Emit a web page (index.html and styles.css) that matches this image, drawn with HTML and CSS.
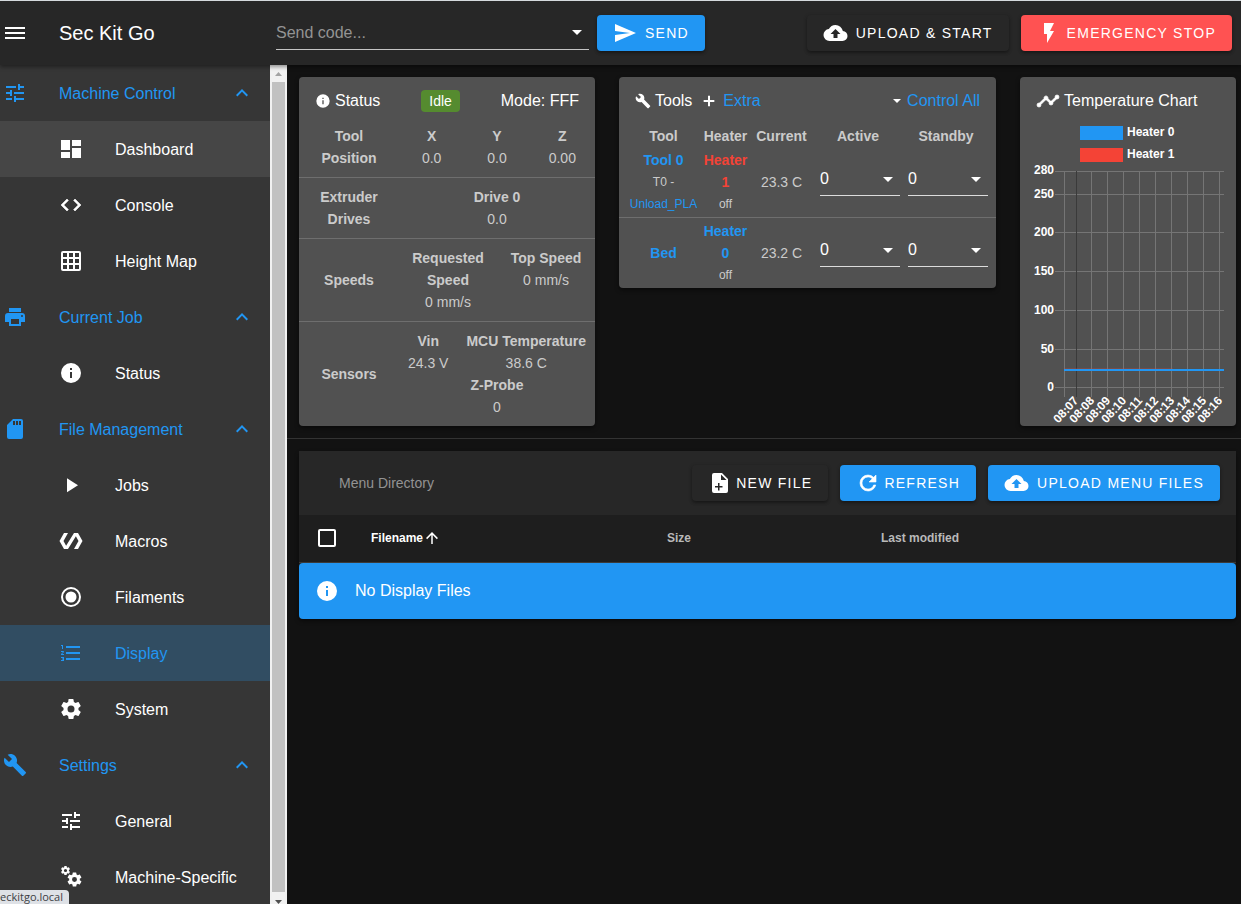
FILE: index.html
```html
<!DOCTYPE html>
<html lang="en">
<head>
<meta charset="utf-8">
<meta name="viewport" content="width=device-width, initial-scale=1">
<title>Sec Kit Go</title>
<link rel="stylesheet" href="styles.css">
</head>
<body>
<svg class="sprite" aria-hidden="true">
  <symbol id="i-menu" viewBox="0 0 24 24"><path d="M2 6h20v2H2zM2 11h20v2H2zM2 16h20v2H2z"/></symbol>
  <symbol id="i-tune" viewBox="0 0 24 24"><path d="M3 17v2h6v-2H3M3 5v2h10V5H3m10 16v-2h8v-2h-8v-2h-2v6h2M7 9v2H3v2h4v2h2V9H7m14 4v-2H11v2h10m-6-4h2V7h4V5h-4V3h-2v6z"/></symbol>
  <symbol id="i-up" viewBox="0 0 24 24"><path d="M7.41 15.41 12 10.83l4.59 4.58L18 14l-6-6-6 6 1.41 1.41z"/></symbol>
  <symbol id="i-dash" viewBox="0 0 24 24"><path d="M13 3v6h9V3m-9 18h9V11h-9M2 21h9v-6H2m0-2h9V3H2v10z"/></symbol>
  <symbol id="i-code" viewBox="0 0 24 24"><path stroke="currentColor" stroke-width=".6" d="m14.6 16.6 4.600-4.600-4.600-4.600L16 6l6 6-6 6-1.400-1.400m-5.200 0L4.800 12l4.600-4.600L8 6l-6 6 6 6 1.400-1.400z"/></symbol>
  <symbol id="i-grid" viewBox="0 0 24 24"><path d="M10 4v4h4V4h-4m6 0v4h4V4h-4m0 6v4h4v-4h-4m0 6v4h4v-4h-4m-2 4v-4h-4v4h4m-6 0v-4H4v4h4m0-6v-4H4v4h4m0-6V4H4v4h4m2 6h4v-4h-4v4M4 2h16a2 2 0 0 1 2 2v16a2 2 0 0 1-2 2H4a2 2 0 0 1-2-2V4a2 2 0 0 1 2-2z"/></symbol>
  <symbol id="i-print" viewBox="0 0 24 24"><path d="M18 3H6v4h12m1 5a1 1 0 0 1-1-1 1 1 0 0 1 1-1 1 1 0 0 1 1 1 1 1 0 0 1-1 1m-3 7H8v-5h8m3-6H5a3 3 0 0 0-3 3v6h4v4h12v-4h4v-6a3 3 0 0 0-3-3z"/></symbol>
  <symbol id="i-info" viewBox="0 0 24 24"><path d="M13 9h-2V7h2m0 10h-2v-6h2m-1-9A10 10 0 0 0 2 12a10 10 0 0 0 10 10 10 10 0 0 0 10-10A10 10 0 0 0 12 2z"/></symbol>
  <symbol id="i-sd" viewBox="0 0 24 24"><path d="M18 8h-2V4h2m-3 4h-2V4h2m-3 4h-2V4h2m6-2h-8L4 8v12a2 2 0 0 0 2 2h12a2 2 0 0 0 2-2V4a2 2 0 0 0-2-2z"/></symbol>
  <symbol id="i-play" viewBox="0 0 24 24"><path d="M8 5.140v14l11-7-11-7z"/></symbol>
  <symbol id="i-macro" viewBox="0 0 24 24"><path d="M19 4h-4L7.110 16.630 4.500 12 9 4H5L.5 12 5 20h4l7.890-12.630L19.500 12 15 20h4l4.500-8L19 4z"/></symbol>
  <symbol id="i-record" viewBox="0 0 24 24"><path fill-rule="evenodd" d="M12 2a10 10 0 1 0 0 20 10 10 0 0 0 0-20m0 2a8 8 0 1 1 0 16 8 8 0 0 1 0-16m0 2.500a5.500 5.500 0 1 0 0 11 5.500 5.500 0 0 0 0-11z"/></symbol>
  <symbol id="i-list" viewBox="0 0 24 24"><path d="M7 13v-2h14v2H7m0 6v-2h14v2H7M7 7V5h14v2H7M3 8V5H2V4h2v4H3m-1 9v-1h3v4H2v-1h2v-.500H3v-1h1V17H2m2.250-7a.75.75 0 0 1 .75.750c0 .2-.080.390-.210.520L3.120 13H5v1H2v-.920L4 11H2v-1h2.250z"/></symbol>
  <symbol id="i-cog" viewBox="0 0 24 24"><path d="M12 15.500A3.500 3.500 0 0 1 8.500 12 3.500 3.500 0 0 1 12 8.500a3.500 3.500 0 0 1 3.500 3.500 3.500 3.500 0 0 1-3.500 3.500m7.430-2.530c.04-.32.07-.64.07-.97 0-.33-.03-.66-.07-1l2.110-1.630c.19-.15.24-.42.12-.64l-2-3.460c-.12-.22-.39-.31-.61-.22l-2.490 1c-.52-.39-1.060-.73-1.690-.98l-.37-2.650A.506.506 0 0 0 14 2h-4c-.25 0-.46.18-.5.42l-.37 2.650c-.63.25-1.170.59-1.690.98l-2.490-1c-.22-.09-.49 0-.61.22l-2 3.460c-.13.22-.07.49.12.64L4.570 11c-.04.34-.07.67-.07 1 0 .33.03.65.07.97l-2.110 1.660c-.19.15-.25.42-.12.64l2 3.460c.12.22.39.3.61.22l2.490-1.010c.52.4 1.060.74 1.690.99l.37 2.650c.04.24.25.42.5.42h4c.25 0 .46-.18.5-.42l.37-2.650c.63-.26 1.170-.59 1.690-.99l2.490 1.010c.22.08.49 0 .61-.22l2-3.460c.12-.22.07-.49-.12-.64l-2.110-1.660z"/></symbol>
  <symbol id="i-wrench" viewBox="0 0 24 24"><path d="m22.700 19-9.100-9.100c.9-2.300.4-5-1.500-6.900-2-2-5-2.400-7.400-1.300L9 6 6 9 1.600 4.700C.4 7.100.9 10.100 2.900 12.100c1.900 1.900 4.600 2.400 6.900 1.500l9.100 9.100c.4.4 1 .4 1.400 0l2.300-2.300c.5-.4.500-1.100.1-1.400z"/></symbol>
  <symbol id="i-cogs" viewBox="0 0 24 24"><svg x="1" y="0" width="11" height="11" viewBox="0 0 24 24"><use href="#i-cog"/></svg><svg x="7" y="6" width="17" height="17" viewBox="0 0 24 24"><use href="#i-cog"/></svg></symbol>
  <symbol id="i-caret" viewBox="0 0 10 5"><path d="M0 0h10L5 5z"/></symbol>
  <symbol id="i-send" viewBox="0 0 24 24"><path d="m2 21 21-9L2 3v7l15 2-15 2v7z"/></symbol>
  <symbol id="i-cloud" viewBox="0 0 24 24"><path d="M14 13v4h-4v-4H7l5-5 5 5m2.350-2.970A7.490 7.490 0 0 0 12 4C9.110 4 6.600 5.640 5.350 8.030A6.004 6.004 0 0 0 0 14a6 6 0 0 0 6 6h13a5 5 0 0 0 5-5c0-2.640-2.050-4.780-4.650-4.970z"/></symbol>
  <symbol id="i-flash" viewBox="0 0 24 24"><path d="M7 2v11h3v9l7-12h-4l4-8H7z"/></symbol>
  <symbol id="i-plus" viewBox="0 0 24 24"><path d="M20 13.500h-6.500V20h-3v-6.500H4v-3h6.500V4h3v6.500H20z"/></symbol>
  <symbol id="i-chart" viewBox="0 0 24 24"><path stroke="currentColor" stroke-width=".7" d="M3 14l.5.07L8.070 9.500C7.890 8.850 8.060 8.110 8.590 7.590c.78-.79 2.040-.79 2.820 0 .53.520.7 1.260.52 1.910l2.570 2.570L15 12c.18 0 .35 0 .5.070L19.070 8.500C19 8.350 19 8.180 19 8a2 2 0 0 1 2-2 2 2 0 0 1 2 2 2 2 0 0 1-2 2c-.18 0-.35 0-.5-.070L16.930 13.500c.07.15.07.32.07.5a2 2 0 0 1-2 2 2 2 0 0 1-2-2l.07-.5-2.570-2.570c-.32.07-.68.07-1 0L4.930 15.500 5 16a2 2 0 0 1-2 2 2 2 0 0 1-2-2 2 2 0 0 1 2-2z"/></symbol>
  <symbol id="i-file" viewBox="0 0 24 24"><path fill-rule="evenodd" d="M14 2H6a2 2 0 0 0-2 2v16a2 2 0 0 0 2 2h12a2 2 0 0 0 2-2V8l-6-6zM13 3.500V9h5.500zM10 12h1.500v3h3v1.500h-3v3H10v-3H7V15h3z"/></symbol>
  <symbol id="i-refresh" viewBox="0 0 24 24"><path stroke="currentColor" stroke-width=".6" d="M17.650 6.350A7.958 7.958 0 0 0 12 4a8 8 0 0 0-8 8 8 8 0 0 0 8 8c3.730 0 6.840-2.550 7.730-6h-2.080A5.990 5.990 0 0 1 12 18a6 6 0 0 1-6-6 6 6 0 0 1 6-6c1.660 0 3.140.69 4.220 1.780L13 11h7V4l-2.350 2.350z"/></symbol>
  <symbol id="i-arrow" viewBox="0 0 24 24"><path d="M13 20h-2V8l-5.500 5.500-1.420-1.420L12 4.160l7.920 7.920-1.420 1.420L13 8v12z"/></symbol>
</svg>

<div class="app">
  <header class="bar">
    <button class="plain" aria-label="Menu"><svg class="icon"><use href="#i-menu"/></svg></button>
    <h1 class="brand">Sec Kit Go</h1>
    <div class="combo">
      <input class="combo-input" type="text" placeholder="Send code..." aria-label="Send code">
      <svg class="caret"><use href="#i-caret"/></svg>
    </div>
    <button class="btn blue"><svg class="icon"><use href="#i-send"/></svg>SEND</button>
    <span class="grow"></span>
    <button class="btn"><svg class="icon wide"><use href="#i-cloud"/></svg>UPLOAD &amp; START</button>
    <button class="btn red"><svg class="icon"><use href="#i-flash"/></svg>EMERGENCY STOP</button>
  </header>

  <div class="body">
    <div class="side">
      <nav class="nav">
        <a class="group" href="#"><svg class="icon"><use href="#i-tune"/></svg><span>Machine Control</span><svg class="icon chev"><use href="#i-up"/></svg></a>
        <a class="item hover" href="#"><svg class="icon"><use href="#i-dash"/></svg><span>Dashboard</span></a>
        <a class="item" href="#"><svg class="icon"><use href="#i-code"/></svg><span>Console</span></a>
        <a class="item" href="#"><svg class="icon"><use href="#i-grid"/></svg><span>Height Map</span></a>
        <a class="group" href="#"><svg class="icon"><use href="#i-print"/></svg><span>Current Job</span><svg class="icon chev"><use href="#i-up"/></svg></a>
        <a class="item" href="#"><svg class="icon"><use href="#i-info"/></svg><span>Status</span></a>
        <a class="group" href="#"><svg class="icon"><use href="#i-sd"/></svg><span>File Management</span><svg class="icon chev"><use href="#i-up"/></svg></a>
        <a class="item" href="#"><svg class="icon"><use href="#i-play"/></svg><span>Jobs</span></a>
        <a class="item" href="#"><svg class="icon"><use href="#i-macro"/></svg><span>Macros</span></a>
        <a class="item" href="#"><svg class="icon"><use href="#i-record"/></svg><span>Filaments</span></a>
        <a class="item active" href="#" aria-current="page"><svg class="icon"><use href="#i-list"/></svg><span>Display</span></a>
        <a class="item" href="#"><svg class="icon"><use href="#i-cog"/></svg><span>System</span></a>
        <a class="group" href="#"><svg class="icon"><use href="#i-wrench"/></svg><span>Settings</span><svg class="icon chev"><use href="#i-up"/></svg></a>
        <a class="item" href="#"><svg class="icon"><use href="#i-tune"/></svg><span>General</span></a>
        <a class="item" href="#"><svg class="icon"><use href="#i-cogs"/></svg><span>Machine-Specific</span></a>
      </nav>
      <div class="scroll" aria-hidden="true">
        <svg class="scroll-arrow off" viewBox="0 0 17 17"><path d="M5 11h7L8.500 7z"/></svg>
        <div class="thumb"></div>
        <svg class="scroll-arrow down" viewBox="0 0 17 12"><path d="M5 8h7l-3.500 4z"/></svg>
      </div>
    </div>

    <main class="main">
      <div class="panels">
        <section class="card">
          <div class="card-head spread">
            <h2 class="title"><svg class="icon sm"><use href="#i-info"/></svg>Status</h2>
            <span class="chip">Idle</span>
            <span>Mode: FFF</span>
          </div>
          <div class="row first">
            <strong class="label">Tool Position</strong>
            <div class="vals even">
              <div><strong>X</strong><span>0.0</span></div>
              <div><strong>Y</strong><span>0.0</span></div>
              <div><strong>Z</strong><span>0.00</span></div>
            </div>
          </div>
          <div class="row">
            <strong class="label">Extruder Drives</strong>
            <div class="vals even"><div><strong>Drive 0</strong><span>0.0</span></div></div>
          </div>
          <div class="row">
            <strong class="label">Speeds</strong>
            <div class="vals even">
              <div><strong>Requested Speed</strong><span>0 mm/s</span></div>
              <div><strong>Top Speed</strong><span>0 mm/s</span></div>
            </div>
          </div>
          <div class="row">
            <strong class="label">Sensors</strong>
            <div class="vals wrap">
              <div><strong>Vin</strong><span>24.3 V</span></div>
              <div><strong>MCU Temperature</strong><span>38.6 C</span></div>
              <div><strong>Z-Probe</strong><span>0</span></div>
            </div>
          </div>
        </section>

        <section class="card">
          <div class="card-head">
            <h2 class="title"><svg class="icon sm"><use href="#i-wrench"/></svg>Tools</h2>
            <a class="link extra" href="#"><svg class="icon plus"><use href="#i-plus"/></svg>Extra</a>
            <span class="grow"></span>
            <a class="link control" href="#"><svg class="caret tiny"><use href="#i-caret"/></svg>Control All</a>
          </div>
          <table class="tools">
            <colgroup><col class="c-tool"><col class="c-heater"><col class="c-current"><col class="c-active"><col class="c-standby"></colgroup>
            <thead>
              <tr><th>Tool</th><th>Heater</th><th>Current</th><th class="set">Active</th><th class="set end">Standby</th></tr>
            </thead>
            <tbody>
              <tr>
                <td><a class="link b" href="#">Tool 0</a><small>T0 -</small><small><a class="link" href="#">Unload_PLA</a></small></td>
                <td><a class="link b hot" href="#">Heater 1</a><small>off</small></td>
                <td>23.3 C</td>
                <td class="set"><div class="pick"><select aria-label="Tool 0 active temperature"><option>0</option></select><svg class="caret"><use href="#i-caret"/></svg></div></td>
                <td class="set end"><div class="pick"><select aria-label="Tool 0 standby temperature"><option>0</option></select><svg class="caret"><use href="#i-caret"/></svg></div></td>
              </tr>
              <tr>
                <td><a class="link b" href="#">Bed</a></td>
                <td><a class="link b" href="#">Heater 0</a><small>off</small></td>
                <td>23.2 C</td>
                <td class="set"><div class="pick"><select aria-label="Bed active temperature"><option>0</option></select><svg class="caret"><use href="#i-caret"/></svg></div></td>
                <td class="set end"><div class="pick"><select aria-label="Bed standby temperature"><option>0</option></select><svg class="caret"><use href="#i-caret"/></svg></div></td>
              </tr>
            </tbody>
          </table>
        </section>

        <section class="card">
          <div class="card-head">
            <h2 class="title"><svg class="icon"><use href="#i-chart"/></svg>Temperature Chart</h2>
          </div>
          <svg class="chart" viewBox="0 0 216 301" role="img" aria-label="Heater temperatures over time">
            <rect x="60" y="1" width="43" height="14" fill="#2196f3"/>
            <rect x="60" y="23" width="43" height="14" fill="#f44336"/>
            <text x="107" y="11">Heater 0</text>
            <text x="107" y="33">Heater 1</text>
            <path class="gridline" d="M35 46.500H204M35 69.500H204M35 107.500H204M35 146.500H204M35 185.500H204M35 224.500H204M35 262.500H204M44.500 46V272M71.500 46V272M87.500 46V272M103.500 46V272M119.500 46V272M135.500 46V272M151.500 46V272M167.500 46V272M183.500 46V272M199.500 46V272"/>
            <path class="zero" d="M56.500 46V272"/>
            <g text-anchor="end">
              <text x="34" y="49">280</text><text x="34" y="73">250</text><text x="34" y="111">200</text><text x="34" y="150">150</text><text x="34" y="189">100</text><text x="34" y="228">50</text><text x="34" y="266">0</text>
              <text transform="translate(59 276) rotate(-48)">08:07</text>
              <text transform="translate(75 276) rotate(-48)">08:08</text>
              <text transform="translate(91 276) rotate(-48)">08:09</text>
              <text transform="translate(107 276) rotate(-48)">08:10</text>
              <text transform="translate(123 276) rotate(-48)">08:11</text>
              <text transform="translate(139 276) rotate(-48)">08:12</text>
              <text transform="translate(155 276) rotate(-48)">08:13</text>
              <text transform="translate(171 276) rotate(-48)">08:14</text>
              <text transform="translate(187 276) rotate(-48)">08:15</text>
              <text transform="translate(203 276) rotate(-48)">08:16</text>
            </g>
            <path d="M44 244.500H152L153 245H204" fill="none" stroke="#f44336" stroke-opacity=".5" stroke-width="2"/>
            <path d="M44 245H204" fill="none" stroke="#2196f3" stroke-width="2"/>
          </svg>
        </section>
      </div>

      <hr class="rule">

      <section class="files">
        <div class="files-bar">
          <span class="crumb">Menu Directory</span>
          <span class="grow"></span>
          <button class="btn tight"><svg class="icon"><use href="#i-file"/></svg>NEW FILE</button>
          <button class="btn tight blue"><svg class="icon"><use href="#i-refresh"/></svg>REFRESH</button>
          <button class="btn blue"><svg class="icon wide"><use href="#i-cloud"/></svg>UPLOAD MENU FILES</button>
        </div>
        <table class="list">
          <colgroup><col class="c-check"><col class="c-name"><col class="c-size"><col></colgroup>
          <thead>
            <tr>
              <th><input class="check" type="checkbox" aria-label="Select all files"></th>
              <th class="sorted"><span class="sort">Filename<svg class="icon arrow"><use href="#i-arrow"/></svg></span></th>
              <th>Size</th>
              <th>Last modified</th>
            </tr>
          </thead>
        </table>
        <div class="notice" role="status"><svg class="icon"><use href="#i-info"/></svg>No Display Files</div>
      </section>
    </main>
  </div>
  <div class="hint">eckitgo.local</div>
</div>
</body>
</html>
```
FILE: styles.css
```css
* { box-sizing: border-box; }

html, body { height: 100%; }

body {
  margin: 0;
  padding-right: 7px;
  background: #fff;
  color: #fff;
  font: 16px/24px "Liberation Sans", Arial, sans-serif;
  overflow: hidden;
}

a { color: inherit; text-decoration: none; }
h1, h2 { margin: 0; font-size: 16px; font-weight: 400; }
button, input, select { font: inherit; color: inherit; }

.sprite { display: none; }
.icon { width: 24px; height: 24px; flex: none; fill: currentColor; }
.caret { width: 10px; height: 5px; flex: none; fill: #fff; }
.grow { flex: 1; }

.app {
  position: relative;
  height: 100vh;
  display: flex;
  flex-direction: column;
  border-top: 1px solid #d5dade;
  background: #121212;
  overflow: hidden;
}

/* Top bar */
.bar {
  position: relative;
  z-index: 1;
  flex: none;
  display: flex;
  align-items: center;
  height: 64px;
  padding: 0 9px 0 3px;
  background: #272727;
  box-shadow: 0 2px 4px rgba(0, 0, 0, .4);
}
.plain { display: flex; padding: 0; border: 0; background: none; }
.brand { width: 217px; margin-left: 32px; font-size: 20px; }
.combo {
  width: 313px;
  height: 34px;
  display: flex;
  align-items: center;
  padding-right: 7px;
  border-bottom: 1px solid #c4c4c4;
}
.combo-input {
  flex: 1;
  min-width: 0;
  padding: 0;
  border: 0;
  outline: 0;
  background: none;
}
.combo-input::placeholder { color: #939393; opacity: 1; }

.btn {
  flex: none;
  display: flex;
  align-items: center;
  gap: 8px;
  height: 36px;
  padding: 0 16px;
  border: 0;
  border-radius: 4px;
  background: #272727;
  font-size: 14px;
  letter-spacing: .09em;
  box-shadow: 0 2px 3px rgba(0, 0, 0, .3), 0 1px 4px rgba(0, 0, 0, .15);
}
.btn .wide { width: 25px; }
.btn.tight { gap: 4px; }
.btn.blue { background: #2196f3; }
.btn.red { gap: 6px; background: #ff5252; }
.bar .btn { margin-left: 8px; }
.bar .btn.red { margin-left: 12px; }

/* Sidebar */
.body { flex: 1; min-height: 0; display: flex; }
.side { flex: none; display: flex; width: 287px; }
.nav { flex: 1; background: #363636; overflow: hidden; }
.group, .item { display: flex; align-items: center; height: 56px; }
.group span, .item span { flex: 1; padding-top: 2px; }
.group { gap: 32px; padding: 0 16px 0 3px; color: #2196f3; }
.item { gap: 32px; padding-left: 59px; }
.item.hover { background: #464646; }
.item.active { background: #314d62; color: #2196f3; }
.scroll { width: 17px; display: flex; flex-direction: column; background: #f1f1f1; }
.scroll-arrow { width: 17px; height: 17px; flex: none; fill: #505050; }
.scroll-arrow.off { fill: #a3a3a3; }
.scroll-arrow.down { height: 12px; }
.thumb { flex: 1; margin: 0 2px; background: #c1c1c1; }

/* Panels */
.main { flex: 1; min-width: 0; padding: 12px 5px 12px 0; }
.panels {
  display: grid;
  grid-template-columns: minmax(0, 296fr) minmax(0, 377fr) minmax(0, 216fr);
  gap: 24px;
  align-items: start;
  padding-left: 12px;
}
.card {
  border-radius: 4px;
  background: #515151;
  color: #cbcbcb;
  font-size: 14px;
  line-height: 22px;
  box-shadow: 0 2px 4px rgba(0, 0, 0, .5);
  overflow: hidden;
}
.card-head {
  display: flex;
  align-items: center;
  height: 48px;
  padding: 0 16px;
  color: #fff;
  font-size: 16px;
}
.spread { justify-content: space-between; }
.title { display: flex; align-items: center; gap: 4px; }
.icon.sm { width: 16px; height: 16px; }
.chip {
  padding: 0 8px;
  border-radius: 4px;
  background: #558b2f;
  font-size: 14px;
}

.row { display: flex; align-items: center; padding: 8px 0; border-top: 1px solid #6e6e6e; text-align: center; }
.row.first { padding-top: 0; border-top: 0; }
.label { flex: none; width: 100px; padding: 0 16px; }
.vals { flex: 1; min-width: 0; display: flex; }
.vals > div { display: flex; flex-direction: column; }
.even > div { flex: 1 1 0; min-width: 0; }
.wrap { flex-wrap: wrap; }
.wrap > div { flex: 1 1 auto; }

.link { color: #2196f3; }
.link.b { font-weight: 700; }
.link.hot { color: #f44336; }
.extra, .control { display: flex; align-items: center; gap: 6px; margin-left: 9px; }
.extra svg { color: #fff; }
.icon.plus { width: 16px; height: 16px; }
.caret.tiny { width: 8px; height: 4px; }

.tools { width: 100%; table-layout: fixed; border-collapse: collapse; text-align: center; }
.tools th { padding: 0; }
.tools td { padding: 2px 0; }
.tools td:first-child, .tools th:first-child { padding-left: 8px; }
.tools tbody tr + tr { border-top: 1px solid #6e6e6e; }
.tools small { display: block; font-size: 12px; }
.c-tool { width: 81px; }
.c-heater { width: 51px; }
.c-current { width: 61px; }
.c-active { width: 88px; }
.c-standby { width: 96px; }
.tools .set { padding-left: 8px; }
.tools th.set { padding-left: 4px; }
.tools .end { padding-right: 8px; }
.pick { display: grid; align-items: center; height: 28px; border-bottom: 1px solid #dcdcdc; padding-bottom: 5px; }
.pick select, .pick .caret { grid-area: 1 / 1; }
.pick select {
  width: 100%;
  padding: 0;
  border: 0;
  outline: 0;
  background: none;
  appearance: none;
  color: #fff;
  font-size: 16px;
}
.pick .caret { justify-self: end; margin-right: 7px; pointer-events: none; }

.chart { display: block; width: 100%; }
.chart text { fill: #fff; font: 700 12px "Liberation Sans", Arial, sans-serif; }
.gridline { fill: none; stroke: #757575; }
.zero { stroke: #3a3a3a; }

.rule { height: 1px; margin: 12px -5px 12px 0; border: 0; background: #333; }

/* File list */
.files { margin-left: 12px; background: #1e1e1e; box-shadow: 0 2px 4px rgba(0, 0, 0, .5); border-radius: 4px; }
.files-bar {
  display: flex;
  align-items: center;
  gap: 12px;
  height: 64px;
  padding: 0 16px 0 40px;
  background: #272727;
}
.crumb { color: #939393; font-size: 14px; }
.list { width: 100%; table-layout: fixed; border-collapse: collapse; border-bottom: 1px solid #3a3a3a; text-align: left; }
.list th { height: 47px; padding: 0; color: #b9b9b9; font-size: 12px; }
.list th.sorted { color: #fff; }
.c-check { width: 72px; }
.c-name { width: 296px; }
.c-size { width: 214px; }
.sort { display: flex; align-items: center; }
.icon.arrow { width: 18px; height: 18px; }
.check {
  display: block;
  width: 18px;
  height: 18px;
  margin: 0 0 0 19px;
  border: 2px solid #fff;
  border-radius: 2px;
  appearance: none;
}
.notice {
  display: flex;
  align-items: center;
  gap: 16px;
  height: 56px;
  padding: 0 16px;
  border-radius: 4px;
  background: #2196f3;
}

/* Link hint over the bottom-left corner */
.hint {
  position: absolute;
  z-index: 2;
  left: 0;
  bottom: 0;
  padding-right: 6px;
  border-radius: 0 4px 0 0;
  background: #dee1e6;
  color: #3c4043;
  font: 11px/14px "Open Sans", "Noto Sans", sans-serif;
}
```
